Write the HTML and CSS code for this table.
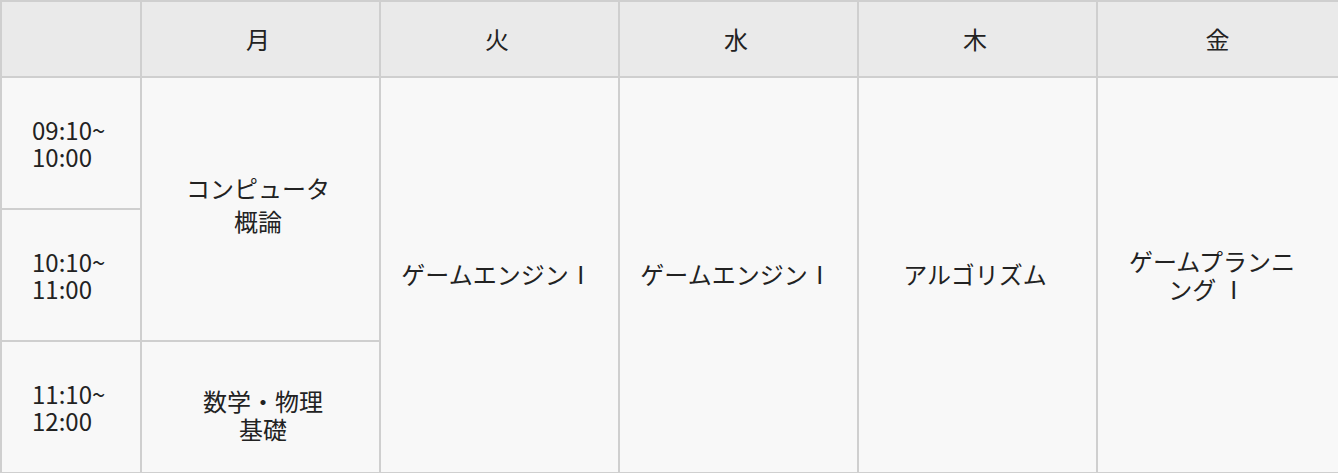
FILE: index.html
```html
<!DOCTYPE html>
<html lang="ja">
<head>
<meta charset="utf-8">
<title>時間割</title>
<link rel="stylesheet" href="styles.css">
</head>
<body>
<table class="timetable">
  <colgroup>
    <col class="col-time">
    <col class="col-day">
    <col class="col-day">
    <col class="col-day">
    <col class="col-day">
    <col class="col-last">
  </colgroup>
  <thead>
    <tr class="head-row">
      <th class="cell head"></th>
      <th class="cell head">月</th>
      <th class="cell head">火</th>
      <th class="cell head">水</th>
      <th class="cell head">木</th>
      <th class="cell head">金</th>
    </tr>
  </thead>
  <tbody>
    <tr class="slot-row">
      <td class="cell time"><span class="line">09:10~</span><span class="line">10:00</span></td>
      <td class="cell course course-up" rowspan="2"><span class="line">コンピュータ</span><span class="line line-wide">概論</span></td>
      <td class="cell course course-mid" rowspan="3"><span class="line">ゲームエンジンⅠ</span></td>
      <td class="cell course course-mid" rowspan="3"><span class="line">ゲームエンジンⅠ</span></td>
      <td class="cell course course-mid" rowspan="3"><span class="line">アルゴリズム</span></td>
      <td class="cell course course-last" rowspan="3"><span class="line">ゲームプランニ</span><span class="line line-shift">ング Ⅰ</span></td>
    </tr>
    <tr class="slot-row">
      <td class="cell time"><span class="line">10:10~</span><span class="line">11:00</span></td>
    </tr>
    <tr class="slot-row">
      <td class="cell time"><span class="line">11:10~</span><span class="line">12:00</span></td>
      <td class="cell course course-down"><span class="line">数学・物理</span><span class="line">基礎</span></td>
    </tr>
  </tbody>
</table>
</body>
</html>
```

FILE: styles.css
```css
html, body {
  margin: 0;
  padding: 0;
  background: #ffffff;
}

body {
  font-family: "Noto Sans CJK JP", "Noto Sans", sans-serif;
  color: #222222;
  overflow: hidden;
}

.timetable {
  border-collapse: separate;
  border-spacing: 0;
  border: 1px solid #cfcfcf;
  table-layout: fixed;
  width: 1344px;
}

.col-time { width: 140px; }
.col-day { width: 239px; }
.col-last { width: 246px; }

.cell {
  box-sizing: border-box;
  border: 1px solid #cfcfcf;
  padding: 0;
  vertical-align: middle;
  font-size: 24px;
  font-weight: 400;
}

.head-row { height: 76px; }
.slot-row { height: 132px; }

.head {
  background: #eaeaea;
  text-align: center;
  padding: 0 5px 2px 0;
}

.time {
  background: #f8f8f8;
  line-height: 27px;
  text-align: left;
  padding: 0 0 1px 30px;
}

.course {
  background: #f8f8f8;
  line-height: 29px;
  text-align: center;
  padding: 0 5px 0 0;
}

.line {
  display: block;
  white-space: nowrap;
}

.line-wide { margin-top: 4px; }
.line-shift { margin-right: 10px; }

.course-up { padding-bottom: 10px; }
.course-mid { padding-bottom: 4px; }
.course-last { padding-right: 16px; padding-bottom: 1px; line-height: 28px; }
.course-down { padding: 15px 0 0 5px; line-height: 28px; }
```
